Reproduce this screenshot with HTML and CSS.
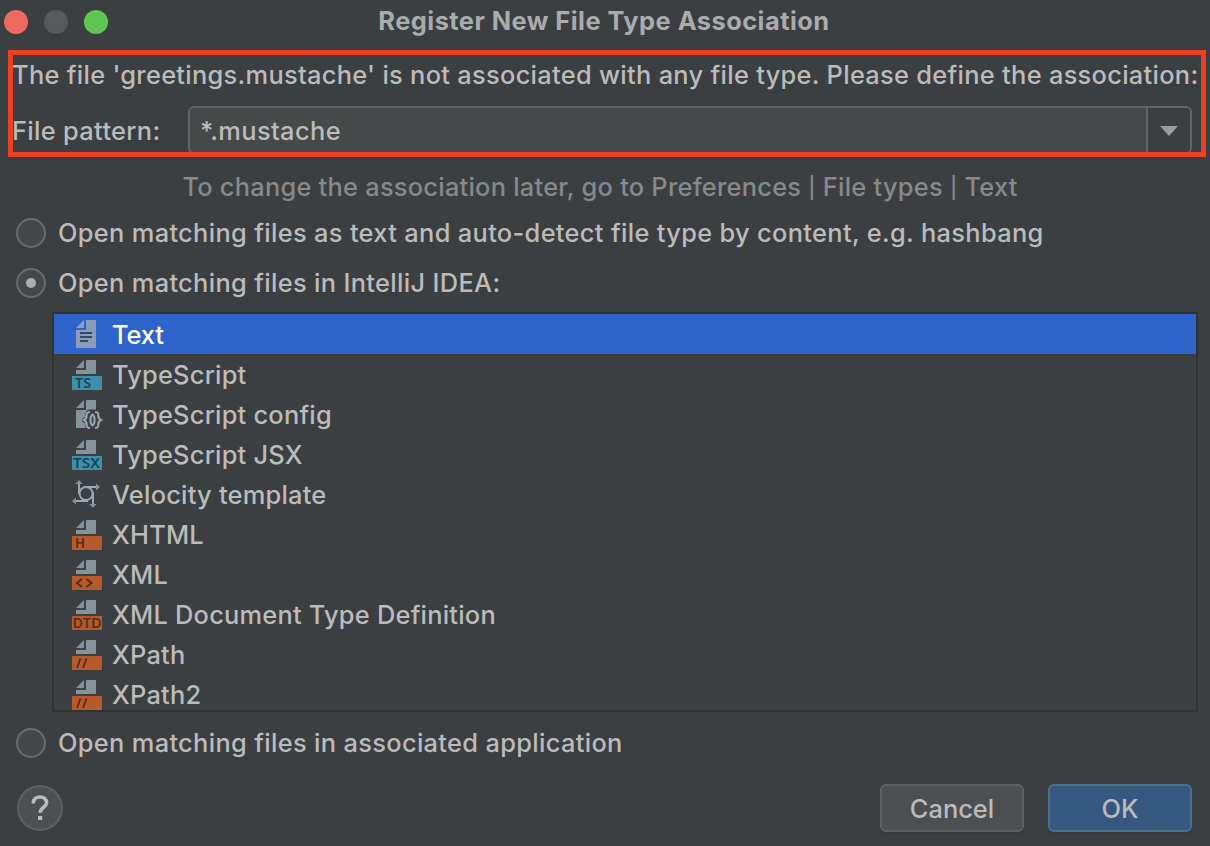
FILE: index.html
```
<!DOCTYPE html>
<html lang="en">
<head>
<meta charset="utf-8">
<title>Register New File Type Association</title>
<link rel="stylesheet" href="styles.css">
</head>
<body>
<svg class="defs" width="0" height="0" aria-hidden="true">
  <symbol id="doc-top" viewBox="0 0 32 32">
    <path d="M14 2v8H6zM16 2h10v14H6v-4h10z"/>
  </symbol>
</svg>
<main class="dialog">
  <header class="titlebar">
    <div class="lights"><i class="light red"></i><i class="light gray"></i><i class="light green"></i></div>
    <h1 class="title">Register New File Type Association</h1>
  </header>

  <section class="pattern">
    <p class="message">The file 'greetings.mustache' is not associated with any file type. Please define the association:</p>
    <div class="field">
      <label class="field-label">File pattern:</label>
      <div class="combo">
        <span class="combo-value">*.mustache</span>
        <span class="combo-arrow"><svg width="18" height="10" viewBox="0 0 18 10"><path d="M0 0h18L9 10z"/></svg></span>
      </div>
    </div>
    <div class="highlight"></div>
  </section>

  <p class="hint">To change the association later, go to Preferences <span class="pipe">|</span> File types <span class="pipe">|</span> Text</p>

  <div class="option"><i class="radio"></i><span>Open matching files as text and auto-detect file type by content, e.g. hashbang</span></div>
  <div class="option"><i class="radio checked"></i><span>Open matching files in IntelliJ IDEA:</span></div>

  <ul class="types">
    <li class="row selected">
      <svg class="icon" viewBox="0 0 32 32"><path d="M14 2v8H6zM16 2h10v28H6V12h10z"/><path class="ink" d="M10 14h12v2H10zM10 18h12v2H10zM10 22h8v2h-8z"/></svg>
      <span>Text</span></li>
    <li class="row">
      <svg class="icon" viewBox="0 0 32 32"><use href="#doc-top"/><path class="teal" d="M2 18h30v14H2z"/><text class="tag on-teal" x="5" y="30" textLength="16" lengthAdjust="spacingAndGlyphs">TS</text></svg>
      <span>TypeScript</span></li>
    <li class="row">
      <svg class="icon" viewBox="0 0 32 32"><path d="M14 2v8H6zM16 2h10v9.500h-6c-3 0-4.500 2-4.500 4.500v3l-3.500 2v2.500l3.500 2V30H6V12h10z"/><path class="brace" d="M20 14c-3 0-3.300 1-3.300 3.200 0 2.800-.4 3.800-2.700 4.800 2.300 1 2.700 2 2.700 4.800 0 2.200.3 3.200 3.300 3.200M25 14c3 0 3.300 1 3.300 3.200 0 2.800.4 3.800 2.700 4.800-2.300 1-2.700 2-2.700 4.800 0 2.200-.3 3.200-3.300 3.200"/><path class="brace" d="M22.500 16.500c-2.800 2-2.800 9 0 11 2.800-2 2.800-9 0-11z"/></svg>
      <span>TypeScript config</span></li>
    <li class="row">
      <svg class="icon" viewBox="0 0 32 32"><use href="#doc-top"/><path class="teal" d="M2 18h30v14H2z"/><text class="tag on-teal" x="3" y="30" textLength="27" lengthAdjust="spacingAndGlyphs">TSX</text></svg>
      <span>TypeScript JSX</span></li>
    <li class="row">
      <svg class="icon" viewBox="0 0 32 32"><circle class="line" cx="16" cy="15.500" r="6.500"/><path class="line" d="M9 16V4M14 9h14M23 14v13M18 23H4"/><path d="M9 2l3.500 4h-7zM30 9l-4 3.500v-7zM23 30l-3.500-4h7zM2 23l4-3.500v7z"/></svg>
      <span>Velocity template</span></li>
    <li class="row">
      <svg class="icon" viewBox="0 0 32 32"><use href="#doc-top"/><path class="rust" d="M2 18h30v14H2z"/><text class="tag on-rust" x="5" y="30" textLength="10" lengthAdjust="spacingAndGlyphs">H</text></svg>
      <span>XHTML</span></li>
    <li class="row">
      <svg class="icon" viewBox="0 0 32 32"><use href="#doc-top"/><path class="rust" d="M2 18h30v14H2z"/><path class="mark" d="M12 21l-5 4 5 4M16.500 21l5 4-5 4"/></svg>
      <span>XML</span></li>
    <li class="row">
      <svg class="icon" viewBox="0 0 32 32"><use href="#doc-top"/><path class="rust" d="M2 18h30v14H2z"/><text class="tag on-rust" x="2.500" y="30" textLength="29" lengthAdjust="spacingAndGlyphs">DTD</text></svg>
      <span>XML Document Type Definition</span></li>
    <li class="row">
      <svg class="icon" viewBox="0 0 32 32"><use href="#doc-top"/><path class="rust" d="M2 18h30v14H2z"/><path class="mark" d="M10.500 20.500l-3.500 9.500M16.500 20.500l-3.500 9.500"/></svg>
      <span>XPath</span></li>
    <li class="row">
      <svg class="icon" viewBox="0 0 32 32"><use href="#doc-top"/><path class="rust" d="M2 18h30v14H2z"/><path class="mark" d="M10.500 20.500l-3.500 9.500M16.500 20.500l-3.500 9.500"/></svg>
      <span>XPath2</span></li>
  </ul>

  <div class="option last"><i class="radio"></i><span>Open matching files in associated application</span></div>

  <footer class="footer">
    <button class="help" aria-label="Help"><svg width="18" height="26" viewBox="0 0 18 26"><path class="hook" d="M2.200 8.500C2.200 4.300 5 2 9 2s6.600 2.200 6.600 5.600c0 4.600-6.400 4.800-6.400 10.200"/><path class="dot" d="M7 21h4.200v4H7z"/></svg></button>
    <div class="actions">
      <button class="btn">Cancel</button>
      <button class="btn primary">OK</button>
    </div>
  </footer>
</main>
</body>
</html>
```
FILE: styles.css
```
* { box-sizing: border-box; }
body {
  margin: 0;
  background: #3c3f41;
  color: #bbbbbb;
  font: 450 25.4px/30px Inter, "Liberation Sans", sans-serif;
  letter-spacing: 0.33px;
}
h1, p, ul { margin: 0; padding: 0; }
.defs { position: absolute; }
.dialog { width: 1210px; height: 846px; overflow: hidden; white-space: nowrap; display: flex; flex-direction: column; }

.titlebar { height: 44px; display: grid; grid-template-columns: 108px 1fr 110px; align-items: center; flex: none; }
.lights { display: flex; gap: 16px; padding-left: 4px; }
.light { width: 24px; height: 24px; border-radius: 50%; }
.red { background: #ed6a5e; }
.gray { background: #565a5c; }
.green { background: #61c554; }
.title { font-size: 25.4px; line-height: 30px; font-weight: 700; letter-spacing: 0.47px; color: #a9abac; text-align: center; padding-bottom: 2px; }

.pattern { position: relative; height: 112px; padding: 16px 18px 0 12px; flex: none; }
.message { letter-spacing: 0.3px; }
.field { display: flex; align-items: center; margin-top: 16px; height: 48px; }
.field-label { width: 176px; padding-top: 2px; }
.combo { flex: 1; height: 48px; display: flex; border: 2px solid #646464; border-radius: 6px; background: #45494a; overflow: hidden; }
.combo-value { flex: 1; padding: 8px 0 0 10px; letter-spacing: 0.4px; }
.combo-arrow { width: 44px; padding-top: 2px; border-left: 2px solid #646464; background: #3c3f41; display: flex; align-items: center; justify-content: center; }
.combo-arrow svg { fill: #9a9da0; }
.highlight { position: absolute; left: 8px; top: 6px; width: 1198px; height: 107px; border: 5px solid #ee4024; }

.hint { margin-top: 16px; text-align: center; padding-right: 10px; color: #87898a; flex: none; height: 36px; letter-spacing: 0.25px; }
.pipe { font-size: 21px; line-height: 1; vertical-align: 1px; }
.option { display: flex; align-items: center; gap: 12px; height: 50px; padding-left: 16px; flex: none; }
.radio { width: 30px; height: 30px; border: 2px solid #6b6b6b; border-radius: 50%; background: #43494a; display: grid; place-items: center; }
.checked::after { content: ""; width: 10px; height: 10px; border-radius: 50%; background: #adadad; }

.types { list-style: none; margin: 4px 12px 0 52px; height: 400px; border: 2px solid #323232; overflow: hidden; flex: none; letter-spacing: 0.23px; }
.row { height: 40px; display: flex; align-items: center; gap: 10px; padding: 0 0 2px 16px; }
.row span { padding-top: 4px; }
.selected { background: #2f65ca; color: #fff; font-weight: 500; letter-spacing: -0.1px; }
.icon { width: 32px; height: 32px; fill: #87939a; flex: none; margin-top: 2px; overflow: visible; }
.selected .icon { fill: #8b9dba; }
.icon .ink { fill: #3c4660; }
.icon .teal { fill: #3d8fab; }
.icon .rust { fill: #b8592a; }
.icon .brace { fill: none; stroke: #9aa7b0; stroke-width: 2; }
.icon .line { fill: none; stroke: #9aa7b0; stroke-width: 2; }
.icon .mark { fill: none; stroke: #56301f; stroke-width: 2; }
.tag { font: 600 14px "Noto Sans", sans-serif; letter-spacing: 0; }
.icon .on-teal { fill: #1f4452; }
.icon .on-rust { fill: #56301f; }

.last { margin-top: 6px; }
.footer { display: flex; justify-content: space-between; align-items: flex-start; padding: 16px 18px 0 17px; flex: none; }
.help { width: 46px; height: 46px; margin-top: 1px; padding: 0; border: 2px solid #5e6060; border-radius: 50%; background: #4c5052; display: grid; place-items: center; }
.hook { fill: none; stroke: #bbb; stroke-width: 3.6; }
.dot { fill: #bbb; }
.actions { display: flex; gap: 24px; }
.btn { width: 144px; height: 48px; padding: 2px 0 0; border: 2px solid #5e6060; border-radius: 6px; background: #4c5052; color: #bbb; font: inherit; box-shadow: 0 2px 2px #37393b; }
.primary { background: #365880; border-color: #4c708c; }
```
